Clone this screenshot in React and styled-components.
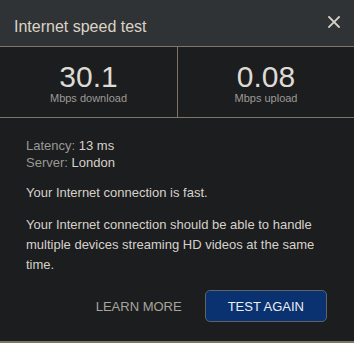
import React from "react";
import styled, { createGlobalStyle } from "styled-components";

const Global = createGlobalStyle`
  html, body { margin: 0; padding: 0; background: #1c1d1f; }
  body { font-family: "Liberation Sans", Arial, sans-serif; }
`;

const Dialog = styled.div`
  width: 354px;
  height: 343px;
  box-sizing: border-box;
  background: #1c1d1f;
  border-bottom: 2px solid #7d7668;
  display: flex;
  flex-direction: column;
`;

const Header = styled.div`
  height: 47px;
  box-sizing: border-box;
  padding: 18px 14px 0 14px;
  background: #303336;
  border-bottom: 1px solid #7d7668;
  display: flex;
  justify-content: space-between;
  align-items: flex-start;
`;

const Title = styled.h1`
  margin: 0;
  font-size: 16px;
  line-height: 18px;
  font-weight: normal;
  color: #dad3c7;
`;

const Close = styled.button`
  border: 0;
  background: none;
  padding: 0;
  margin: -2px 0 0 0;
  width: 12px;
  height: 12px;
  display: flex;
  cursor: pointer;
`;

const Stats = styled.div`
  display: grid;
  grid-template-columns: 177px 1px 1fr;
  border-bottom: 1px solid #7d7668;
`;

const Divider = styled.div`
  background: #7d7668;
`;

const Stat = styled.div`
  padding: 15px 0 12px;
  display: flex;
  flex-direction: column;
  align-items: center;
`;

const Value = styled.div`
  font-size: 30px;
  line-height: 29px;
  color: #dedad4;
`;

const Unit = styled.div`
  margin-top: 1px;
  font-size: 11px;
  line-height: 13px;
  color: #9c9a96;
`;

const Body = styled.div`
  padding: 19px 27px 0 26px;
  font-size: 13px;
  color: #d6d2ca;
`;

const Meta = styled.div`
  line-height: 17px;
  margin-bottom: 12px;
`;

const Label = styled.span`
  color: #9a9894;
`;

const Para = styled.p`
  margin: 0 0 12px;
  line-height: 20px;
`;

const Actions = styled.div`
  display: flex;
  justify-content: flex-end;
  margin-top: 15px;
`;

const Button = styled.button`
  height: 32px;
  box-sizing: border-box;
  padding: 0 22px;
  font-family: "Liberation Sans", Arial, sans-serif;
  font-size: 13px;
  line-height: 15px;
  border-radius: 5px;
  cursor: pointer;
  border: 1px solid ${(p) => (p.$primary ? "#5f6368" : "transparent")};
  background: ${(p) => (p.$primary ? "#0a3271" : "transparent")};
  color: ${(p) => (p.$primary ? "#eceef2" : "#a8a49c")};
`;

export default function App() {
  return (
    <>
      <Global />
      <Dialog>
        <Header>
          <Title>Internet speed test</Title>
          <Close aria-label="Close">
            <svg width="12" height="12" viewBox="0 0 12 12">
              <path d="M1 1 L11 11 M11 1 L1 11" stroke="#d6d1c8" strokeWidth="1.8" strokeLinecap="square" />
            </svg>
          </Close>
        </Header>
        <Stats>
          <Stat>
            <Value>30.1</Value>
            <Unit>Mbps download</Unit>
          </Stat>
          <Divider />
          <Stat>
            <Value>0.08</Value>
            <Unit>Mbps upload</Unit>
          </Stat>
        </Stats>
        <Body>
          <Meta>
            <div><Label>Latency:</Label> 13 ms</div>
            <div><Label>Server:</Label> London</div>
          </Meta>
          <Para>Your Internet connection is fast.</Para>
          <Para>
            Your Internet connection should be able to handle multiple devices streaming HD videos at the same time.
          </Para>
          <Actions>
            <Button>LEARN MORE</Button>
            <Button $primary>TEST AGAIN</Button>
          </Actions>
        </Body>
      </Dialog>
    </>
  );
}
